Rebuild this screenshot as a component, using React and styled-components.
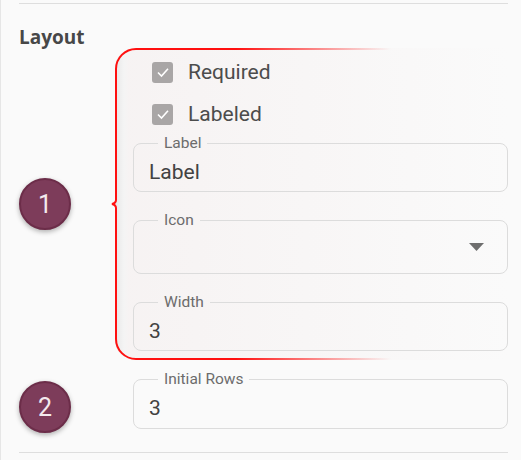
import React from 'react';
import styled, { createGlobalStyle } from 'styled-components';

const GlobalStyle = createGlobalStyle`
  html, body {
    margin: 0;
    padding: 0;
    background: #fafafa;
    font-family: Roboto, "Liberation Sans", Arial, sans-serif;
  }
`;

const Page = styled.div`
  box-sizing: border-box;
  min-height: 460px;
  padding: 3px 13px 0 18px;
  border-left: 1px solid #e6e6e6;
  background: #fafafa;
`;

const Divider = styled.div`
  height: 1px;
  background: #dedede;
  margin-top: ${(p) => p.$top || 0}px;
`;

const Heading = styled.h2`
  margin: 23px 0 0;
  font-family: "Open Sans", "Liberation Sans", sans-serif;
  font-size: 19px;
  font-weight: 700;
  line-height: 21px;
  color: #474747;
`;

const Step = styled.div`
  display: grid;
  grid-template-columns: 96px 1fr;
  align-items: ${(p) => p.$align || 'center'};
  margin-top: ${(p) => p.$top || 0}px;
`;

const Badge = styled.div`
  width: 52px;
  height: 52px;
  box-sizing: border-box;
  border-radius: 50%;
  background: #7d3c5a;
  border: 2px solid #6c2d49;
  box-shadow: 0 2px 5px rgba(0, 0, 0, 0.3);
  display: flex;
  align-items: center;
  justify-content: center;
  color: #f4eaee;
  font-size: 25px;
  margin-top: ${(p) => p.$shift || 0}px;
`;

const Bracket = styled.div`
  position: relative;
  box-sizing: border-box;
  height: 312px;
  padding: 3px 0 5px 18px;
  border-radius: 20px 0 0 20px;
  background: linear-gradient(
    90deg,
    rgba(0, 0, 0, 0.08) 0,
    rgba(0, 0, 0, 0.025) 9px,
    rgba(244, 238, 238, 0.6) 14px,
    rgba(246, 242, 242, 0.4) 60%,
    rgba(250, 250, 250, 0) 100%
  );
`;

const BracketLine = styled.svg`
  position: absolute;
  left: -6px;
  top: 0;
  pointer-events: none;
  overflow: visible;
`;

const Plain = styled.div`
  padding-left: 18px;
`;

const CheckRow = styled.label`
  display: flex;
  align-items: center;
  gap: 15px;
  height: 42px;
  padding-left: 19px;
  font-size: 21px;
  color: #4c4c4c;
`;

const Box = styled.span`
  width: 21px;
  height: 21px;
  border-radius: 3px;
  background: #a9a6a6;
  display: flex;
  align-items: center;
  justify-content: center;
`;

const Field = styled.fieldset`
  box-sizing: border-box;
  margin: ${(p) => p.$gap || 0}px 0 0;
  padding: 0 15px;
  height: ${(p) => p.$h}px;
  border: 1px solid #dcdcdc;
  border-radius: 8px;
  min-width: 0;
`;

const Legend = styled.legend`
  margin-left: 9px;
  padding: 0 6px;
  font-size: 15.5px;
  line-height: 16px;
  color: #6c6c6c;
`;

const Value = styled.div`
  margin-top: 9px;
  font-size: 21px;
  line-height: 24px;
  color: #424242;
`;

const Select = styled.div`
  display: flex;
  justify-content: flex-end;
  padding: 15px 8px 0 0;
`;

function Check({ label }) {
  return (
    <CheckRow>
      <Box>
        <svg width="16" height="16" viewBox="0 0 16 16">
          <path d="M3 8.5 L6.5 12 L13 4.8" fill="none" stroke="#fff" strokeWidth="1.6" />
        </svg>
      </Box>
      {label}
    </CheckRow>
  );
}

export default function App() {
  return (
    <Page>
      <GlobalStyle />
      <Divider />
      <Heading>Layout</Heading>
      <Step>
        <Badge>1</Badge>
        <Bracket>
          <BracketLine width="290" height="312">
            <defs>
              <linearGradient id="fade" gradientUnits="userSpaceOnUse" x1="0" y1="0" x2="282" y2="0">
                <stop offset="0" stopColor="#ff1010" />
                <stop offset="0.45" stopColor="#ff1010" />
                <stop offset="1" stopColor="#ff1010" stopOpacity="0" />
              </linearGradient>
            </defs>
            <path
              d="M282 1 H27 A20 20 0 0 0 7 21 V152 Q7 155 3 156 Q7 157 7 160 V291 A20 20 0 0 0 27 311 H282"
              fill="none"
              stroke="url(#fade)"
              strokeWidth="2"
            />
          </BracketLine>
          <Check label="Required" />
          <Check label="Labeled" />
          <Field $h={57}>
            <Legend>Label</Legend>
            <Value>Label</Value>
          </Field>
          <Field $h={62} $gap={20}>
            <Legend>Icon</Legend>
            <Select>
              <svg width="15" height="8" viewBox="0 0 15 8">
                <path d="M0 0 H15 L7.5 8 Z" fill="#6e6e6e" />
              </svg>
            </Select>
          </Field>
          <Field $h={57} $gap={20}>
            <Legend>Width</Legend>
            <Value>3</Value>
          </Field>
        </Bracket>
      </Step>
      <Step $top={11} $align="start">
        <Badge $shift={10}>2</Badge>
        <Plain>
          <Field $h={58}>
            <Legend>Initial Rows</Legend>
            <Value>3</Value>
          </Field>
        </Plain>
      </Step>
      <Divider $top={19} />
    </Page>
  );
}
